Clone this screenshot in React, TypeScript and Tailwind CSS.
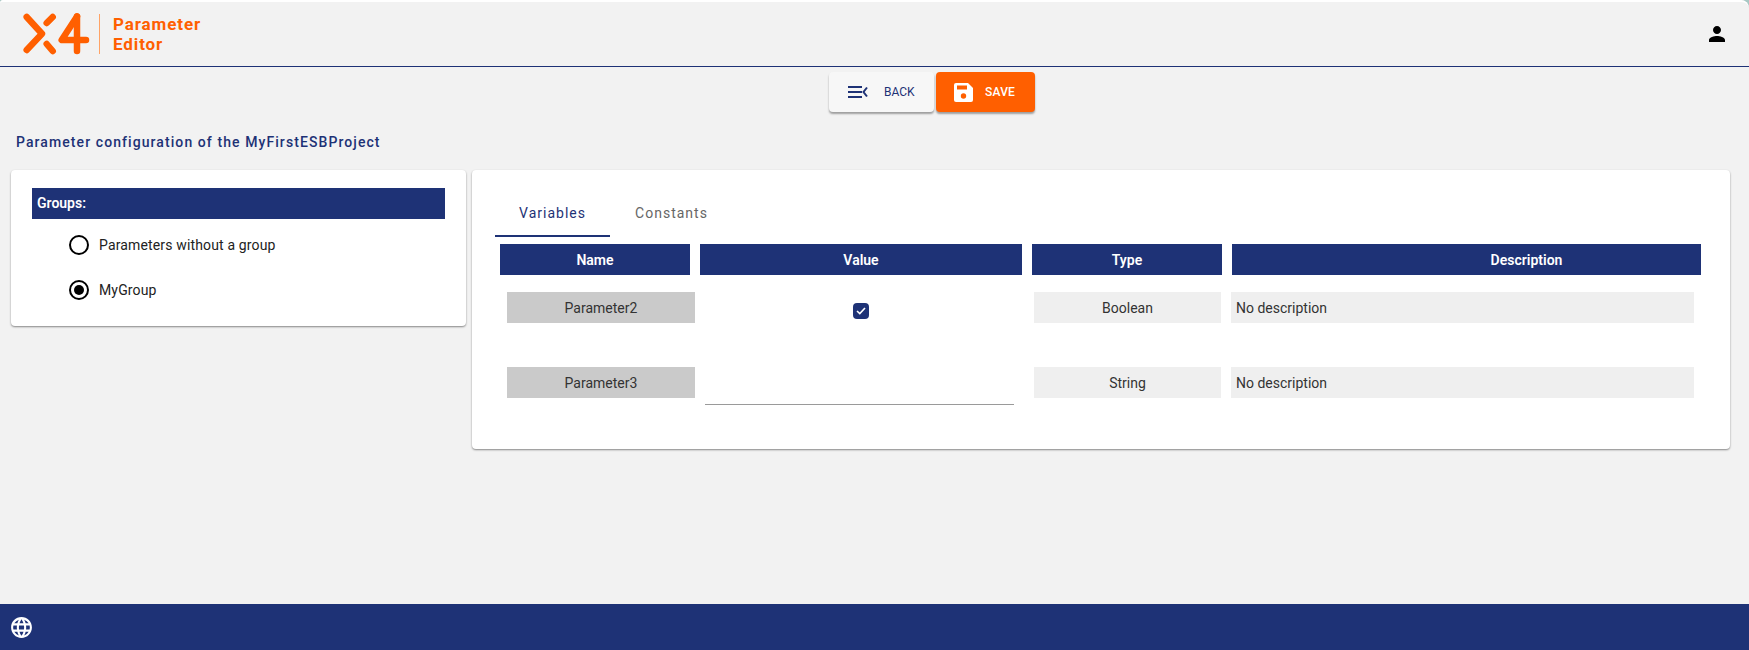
import { MdLanguage } from 'react-icons/md';

const navy = 'bg-[#1e3276]';

function Logo() {
    return (
        <div className="flex items-center">
            <svg width="70" height="46" viewBox="0 0 70 46" fill="none" stroke="#ff5f00" strokeWidth="6.5" strokeLinecap="round" strokeLinejoin="round">
                <path d="M4.7 6 L20 22.7 L4.7 39" />
                <path d="M30.7 6 L24.7 12" />
                <path d="M24.7 33 L30.7 40" />
                <path d="M55 5.5 L39.7 29 H64" />
                <path d="M55 5.5 V40" />
            </svg>
            <div className="mr-[13px] ml-[7px] h-[40px] w-px bg-[#ffa366]" />
            <div className="text-[17px] leading-[20px] font-bold tracking-[0.9px] text-[#ff5f00]">
                <div>Parameter</div>
                <div>Editor</div>
            </div>
        </div>
    );
}

function Radio({ label, checked }: { label: string; checked?: boolean }) {
    return (
        <div className="flex h-[45px] items-center pl-[37px]">
            <span className="flex h-[20px] w-[20px] items-center justify-center rounded-full border-2 border-black">
                {checked && <span className="h-[10px] w-[10px] rounded-full bg-black" />}
            </span>
            <span className="ml-[10px] pt-px text-[14px] tracking-[0.15px] text-[#222]">{label}</span>
        </div>
    );
}

function HeadCell({ label, className }: { label: string; className: string }) {
    return (
        <div className={`flex h-[31px] items-center justify-center pt-px text-[14px] font-semibold text-white ${navy} ${className}`}>
            {label}
        </div>
    );
}

function ValueCell({ label, className }: { label: string; className: string }) {
    return (
        <div className={`flex h-[31px] items-center justify-center pt-px text-[14px] text-[#333] ${className}`}>
            {label}
        </div>
    );
}

function Row({ name, type, children }: { name: string; type: string; children: React.ReactNode }) {
    return (
        <div className="flex h-[75px] items-start">
            <ValueCell label={name} className="ml-[7px] w-[188px] bg-[#cacaca]" />
            <div className="ml-[5px] w-[319px]">{children}</div>
            <ValueCell label={type} className="ml-[15px] w-[187px] bg-[#efefef]" />
            <div className="ml-[10px] flex h-[31px] w-[463px] items-center bg-[#efefef] pt-px pl-[5px] text-[14px] text-[#333]">
                No description
            </div>
        </div>
    );
}

export default function App() {
    return (
        <div className="bg-[#a8c8c4]">
            <div className="flex h-[650px] flex-col overflow-hidden rounded-tl-[3px] rounded-tr-[8px] bg-[#f2f2f2] font-['Roboto',sans-serif]">
                <header className="flex h-[67px] shrink-0 items-center justify-between rounded-tl-[3px] rounded-tr-[8px] border-t-2 border-b border-t-white border-b-[#1e3276] pr-[20px] pl-[22px]">
                    <Logo />
                    <svg width="24" height="24" viewBox="0 0 24 24" fill="#000">
                        <path d="M12 12c2.21 0 4-1.79 4-4s-1.79-4-4-4-4 1.79-4 4 1.79 4 4 4zm0 2c-2.67 0-8 1.34-8 4v2h16v-2c0-2.66-5.33-4-8-4z" />
                    </svg>
                </header>

                <div className="flex justify-center gap-[2px] pt-[5px] pl-[115px]">
                    <button className="flex h-[40px] w-[105px] items-center rounded bg-[#f7f7f7] pl-[19px] text-[12px] text-[#1e3276] shadow-[0_2px_2px_rgba(0,0,0,0.35)]">
                        <svg width="20" height="14" viewBox="0 0 20 14" fill="none" stroke="#1e3276" strokeWidth="2">
                            <path d="M0 2 H14 M0 7 H14 M0 12 H14" />
                            <path d="M19 2.5 L15.5 7 L19 11.5" />
                        </svg>
                        <span className="ml-[16px]">BACK</span>
                    </button>
                    <button className="flex h-[40px] w-[99px] items-center rounded bg-[#ff5f00] pl-[18px] text-[12px] font-medium text-white shadow-[0_2px_2px_rgba(0,0,0,0.35)]">
                        <svg width="19" height="19" viewBox="0 0 19 19" fill="#fff">
                            <path d="M2 0 H14 L19 5 V17 a2 2 0 0 1 -2 2 H2 a2 2 0 0 1 -2 -2 V2 a2 2 0 0 1 2 -2 Z" />
                            <rect x="3" y="2.5" width="10" height="4" fill="#ff5f00" />
                            <circle cx="9.5" cy="13" r="2.7" fill="#ff5f00" />
                        </svg>
                        <span className="ml-[12px] tracking-[0.2px]">SAVE</span>
                    </button>
                </div>

                <h1 className="mt-[21px] ml-[16px] text-[14px] leading-[18px] font-medium tracking-[1.08px] text-[#1e3276]">
                    Parameter configuration of the MyFirstESBProject
                </h1>

                <main className="mt-[19px] flex flex-1 items-start gap-[6px] pl-[11px]">
                    <section className="h-[156px] w-[455px] rounded bg-white px-[21px] pt-[18px] shadow-[0_1px_2px_rgba(0,0,0,0.45)]">
                        <div className={`flex h-[31px] items-center pl-[5px] text-[14px] font-semibold text-white ${navy}`}>
                            Groups:
                        </div>
                        <div className="pt-[3px]">
                            <Radio label="Parameters without a group" />
                            <Radio label="MyGroup" checked />
                        </div>
                    </section>

                    <section className="h-[279px] w-[1258px] rounded bg-white pt-[30px] pl-[23px] shadow-[0_1px_2px_rgba(0,0,0,0.45)]">
                        <div className="flex text-[14px] tracking-[1px]">
                            <div className="flex h-[37px] w-[115px] justify-center border-b-2 border-[#1e3276] pt-[3px] text-[#1e3276]">
                                Variables
                            </div>
                            <div className="flex w-[115px] justify-center pt-[3px] pl-[8px] text-[#666]">
                                Constants
                            </div>
                        </div>
                        <div className="mt-[7px] ml-[5px] flex">
                            <HeadCell label="Name" className="w-[190px]" />
                            <HeadCell label="Value" className="ml-[10px] w-[322px]" />
                            <HeadCell label="Type" className="ml-[10px] w-[190px]" />
                            <HeadCell label="Description" className="ml-[10px] w-[469px] pl-[120px]" />
                        </div>
                        <div className="mt-[17px] ml-[5px]">
                            <Row name="Parameter2" type="Boolean">
                                <div className="flex justify-center pt-[11px] pl-[3px]">
                                    <span className="flex h-[16px] w-[16px] items-center justify-center rounded-[4px] bg-[#1e3276]">
                                        <svg width="10" height="8" viewBox="0 0 10 8" fill="none" stroke="#fff" strokeWidth="1.6">
                                            <path d="M1 4 L3.8 6.6 L9 1" />
                                        </svg>
                                    </span>
                                </div>
                            </Row>
                            <Row name="Parameter3" type="String">
                                <div className="mx-[5px] h-[38px] border-b border-[#9a9a9a]" />
                            </Row>
                        </div>
                    </section>
                </main>

                <footer className={`flex h-[46px] shrink-0 items-center pl-[9px] text-white ${navy}`}>
                    <MdLanguage size={25} />
                </footer>
            </div>
        </div>
    );
}
